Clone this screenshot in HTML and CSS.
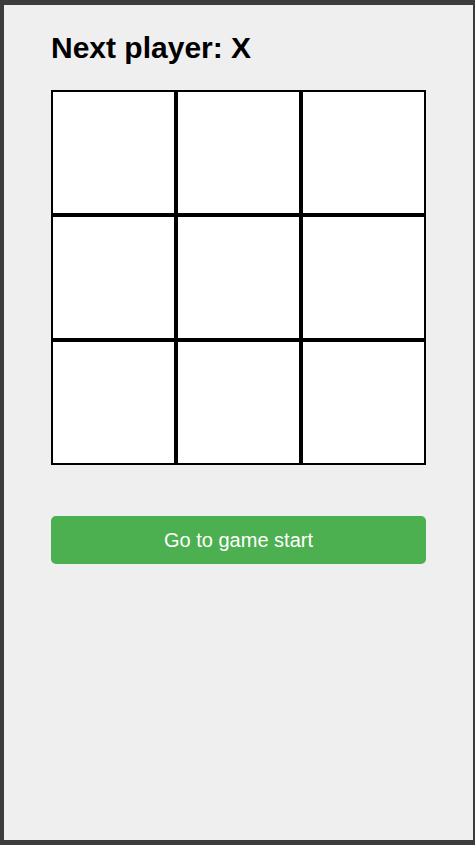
FILE: index.html
```html
<!DOCTYPE html>
<html lang="en">
<head>
<meta charset="utf-8">
<title>Tic-tac-toe</title>
<link rel="stylesheet" href="styles.css">
</head>
<body>
<div class="frame">
  <main class="game">
    <div class="status">Next player: X</div>
    <div class="board">
      <button class="square"></button>
      <button class="square"></button>
      <button class="square"></button>
      <button class="square"></button>
      <button class="square"></button>
      <button class="square"></button>
      <button class="square"></button>
      <button class="square"></button>
      <button class="square"></button>
    </div>
    <button class="history-btn">Go to game start</button>
  </main>
</div>
</body>
</html>
```

FILE: styles.css
```css
html {
  background: #3c3c3c;
  height: 100%;
}
body {
  margin: 0;
  height: 100%;
  padding: 5px 2px 5px 4px;
  box-sizing: border-box;
  font-family: "Liberation Sans", Arial, sans-serif;
}
.frame {
  background: #efefef;
  height: 100%;
}
.game {
  width: 375px;
  margin: 0 auto;
  padding-top: 26px;
  display: flex;
  flex-direction: column;
}
.status {
  font-size: 30px;
  font-weight: bold;
  color: #000;
  line-height: 34px;
  margin-bottom: 25px;
}
.board {
  display: grid;
  grid-template-columns: repeat(3, 125px);
  grid-template-rows: repeat(3, 125px);
}
.square {
  box-sizing: border-box;
  background: #fff;
  border: 2px solid #000;
  margin: 0;
  padding: 0;
}
.history-btn {
  margin-top: 51px;
  height: 48px;
  border: none;
  border-radius: 5px;
  background: #4caf50;
  color: #fff;
  font-family: "Liberation Sans", Arial, sans-serif;
  font-size: 20px;
  padding: 0;
}
```
